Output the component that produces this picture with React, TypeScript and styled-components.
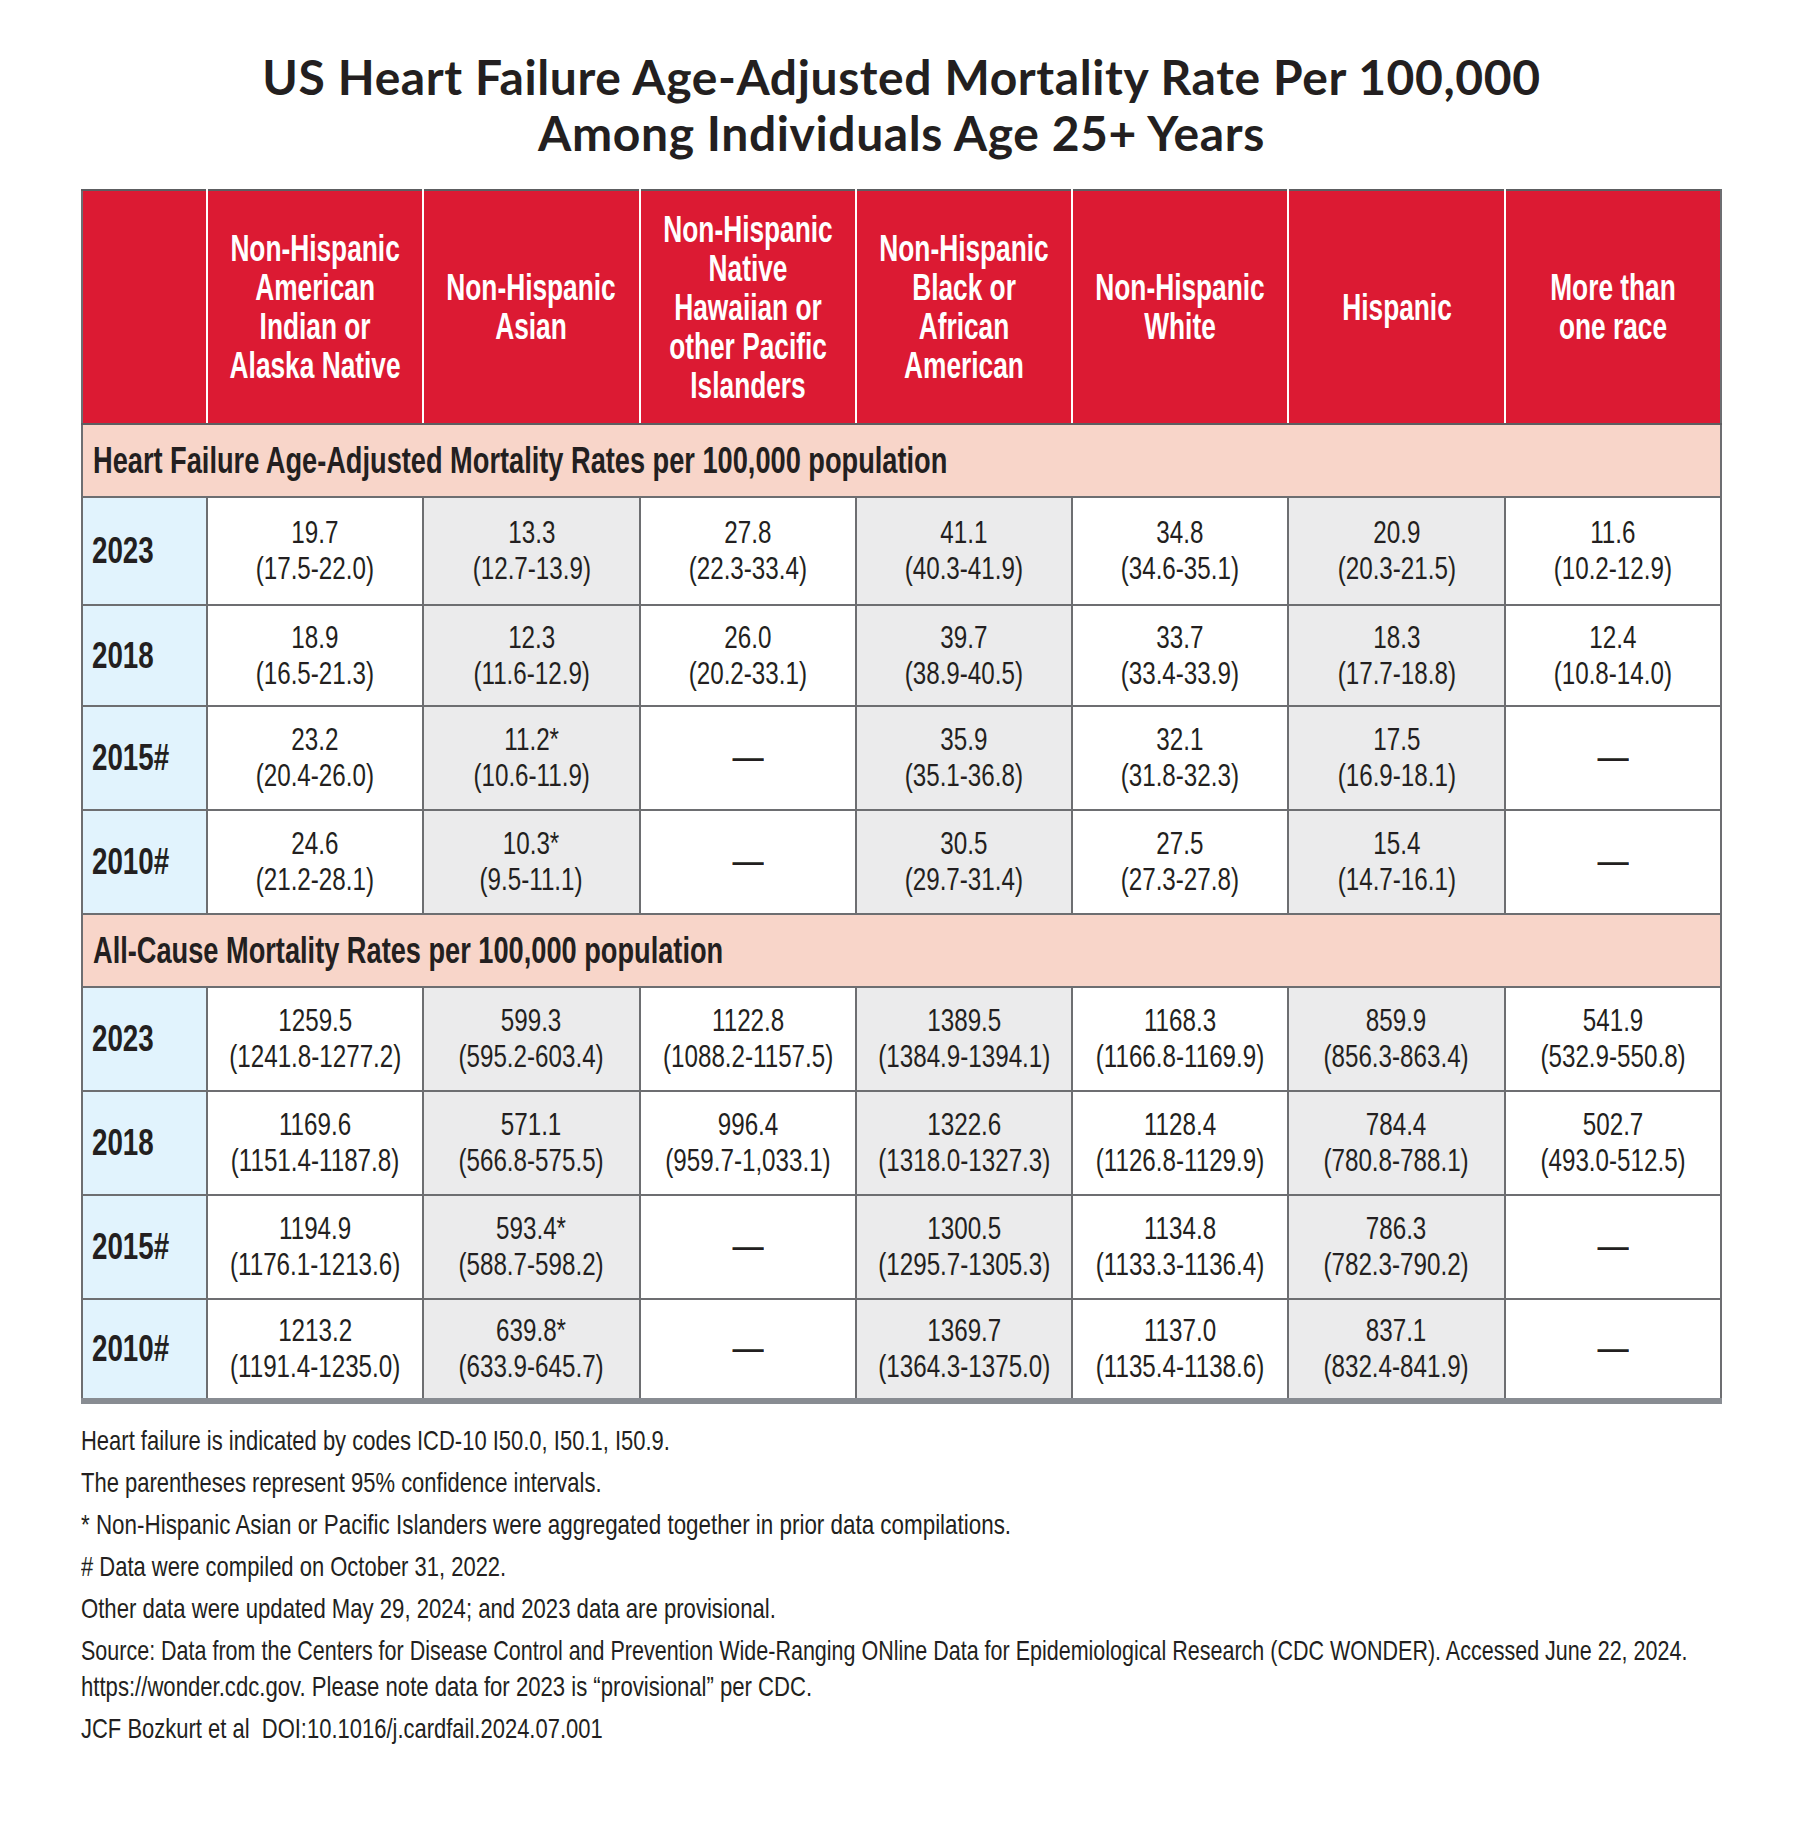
import React from "react";
import styled, { createGlobalStyle } from "styled-components";

const GlobalStyle = createGlobalStyle`
  html, body { margin: 0; padding: 0; background: #ffffff; }
  body { width: 1800px; height: 1822px; overflow: hidden; }
`;

const BASE = `"Liberation Sans", Arial, sans-serif`;

const Page = styled.div`
  width: 1800px;
  height: 1822px;
  box-sizing: border-box;
  padding: 49px 78px 0 81px;
  display: flex;
  flex-direction: column;
  overflow: hidden;
  font-family: ${BASE};
  color: #231f20;
`;

const Title = styled.h1`
  margin: 0 0 28px 0;
  font-family: "Lato", "Liberation Sans", sans-serif;
  font-weight: 700;
  font-size: 48px;
  line-height: 56px;
  letter-spacing: 0.6px;
  text-align: center;
  color: #231f20;
`;

/* Condensed-type emulation: the original uses a condensed face */
const Squeeze = styled.span<{ $x: number; $origin?: "left" | "center" }>`
  display: inline-block;
  white-space: nowrap;
  transform: scaleX(${(p) => p.$x});
  transform-origin: ${(p) => p.$origin ?? "center"} center;
`;

const Center = styled.div`
  display: flex;
  justify-content: center;
  align-items: center;
`;

const Table = styled.table`
  width: 1641px;
  border-collapse: collapse;
  table-layout: fixed;
`;

const HeadCell = styled.th<{ $first?: boolean; $last?: boolean }>`
  height: 234px;
  box-sizing: border-box;
  padding: 0;
  background: #dc1a33;
  color: #ffffff;
  font-weight: 700;
  font-size: 36px;
  line-height: 39px;
  text-align: center;
  vertical-align: middle;
  border-top: 2px solid #5d5e61;
  border-bottom: 2px solid #5d5e61;
  border-left: 2px solid ${(p) => (p.$first ? "#6d6e71" : "#ffffff")};
  border-right: 2px solid ${(p) => (p.$last ? "#6d6e71" : "#ffffff")};
`;

const SectionCell = styled.td`
  height: 73px;
  box-sizing: border-box;
  padding: 0 0 0 10px;
  background: #f8d5c9;
  border: 2px solid #6d6e71;
  font-weight: 700;
  font-size: 37px;
  text-align: left;
  vertical-align: middle;
`;

const YearCell = styled.th`
  box-sizing: border-box;
  padding: 0 0 0 9px;
  background: #e1f3fd;
  border: 2px solid #6d6e71;
  font-weight: 700;
  font-size: 37px;
  text-align: left;
  vertical-align: middle;
`;

const DataCell = styled.td<{ $shade: boolean }>`
  box-sizing: border-box;
  padding: 0;
  background: ${(p) => (p.$shade ? "#ebebec" : "#ffffff")};
  border: 2px solid #6d6e71;
  font-weight: 400;
  font-size: 31px;
  line-height: 36px;
  text-align: center;
  vertical-align: middle;
`;

const Row = styled.tr<{ $h: number; $closing?: boolean }>`
  height: ${(p) => p.$h}px;
  & > th,
  & > td {
    border-bottom: ${(p) => (p.$closing ? "6px solid #888c92" : "2px solid #6d6e71")};
  }
`;

const Dash = styled.span`
  font-size: 40px;
  line-height: 36px;
`;

const Line = styled.span`
  display: block;
`;

const Notes = styled.div`
  margin-top: 19px;
  display: flex;
  flex-direction: column;
  gap: 6px;
  overflow: hidden;
  font-size: 28px;
  line-height: 36px;
  color: #231f20;
`;

const Note = styled.p`
  margin: 0;
`;

type Cell = { v: string; ci: string } | null;

const headers: string[][] = [
  ["Non-Hispanic", "American", "Indian or", "Alaska Native"],
  ["Non-Hispanic", "Asian"],
  ["Non-Hispanic", "Native", "Hawaiian or", "other Pacific", "Islanders"],
  ["Non-Hispanic", "Black or", "African", "American"],
  ["Non-Hispanic", "White"],
  ["Hispanic"],
  ["More than", "one race"],
];

const c = (v: string, ci: string): Cell => ({ v, ci });

const hfRows: { year: string; h: number; cells: Cell[] }[] = [
  {
    year: "2023",
    h: 108,
    cells: [
      c("19.7", "(17.5-22.0)"),
      c("13.3", "(12.7-13.9)"),
      c("27.8", "(22.3-33.4)"),
      c("41.1", "(40.3-41.9)"),
      c("34.8", "(34.6-35.1)"),
      c("20.9", "(20.3-21.5)"),
      c("11.6", "(10.2-12.9)"),
    ],
  },
  {
    year: "2018",
    h: 101,
    cells: [
      c("18.9", "(16.5-21.3)"),
      c("12.3", "(11.6-12.9)"),
      c("26.0", "(20.2-33.1)"),
      c("39.7", "(38.9-40.5)"),
      c("33.7", "(33.4-33.9)"),
      c("18.3", "(17.7-18.8)"),
      c("12.4", "(10.8-14.0)"),
    ],
  },
  {
    year: "2015#",
    h: 104,
    cells: [
      c("23.2", "(20.4-26.0)"),
      c("11.2*", "(10.6-11.9)"),
      null,
      c("35.9", "(35.1-36.8)"),
      c("32.1", "(31.8-32.3)"),
      c("17.5", "(16.9-18.1)"),
      null,
    ],
  },
  {
    year: "2010#",
    h: 104,
    cells: [
      c("24.6", "(21.2-28.1)"),
      c("10.3*", "(9.5-11.1)"),
      null,
      c("30.5", "(29.7-31.4)"),
      c("27.5", "(27.3-27.8)"),
      c("15.4", "(14.7-16.1)"),
      null,
    ],
  },
];

const acRows: { year: string; h: number; cells: Cell[] }[] = [
  {
    year: "2023",
    h: 104,
    cells: [
      c("1259.5", "(1241.8-1277.2)"),
      c("599.3", "(595.2-603.4)"),
      c("1122.8", "(1088.2-1157.5)"),
      c("1389.5", "(1384.9-1394.1)"),
      c("1168.3", "(1166.8-1169.9)"),
      c("859.9", "(856.3-863.4)"),
      c("541.9", "(532.9-550.8)"),
    ],
  },
  {
    year: "2018",
    h: 104,
    cells: [
      c("1169.6", "(1151.4-1187.8)"),
      c("571.1", "(566.8-575.5)"),
      c("996.4", "(959.7-1,033.1)"),
      c("1322.6", "(1318.0-1327.3)"),
      c("1128.4", "(1126.8-1129.9)"),
      c("784.4", "(780.8-788.1)"),
      c("502.7", "(493.0-512.5)"),
    ],
  },
  {
    year: "2015#",
    h: 104,
    cells: [
      c("1194.9", "(1176.1-1213.6)"),
      c("593.4*", "(588.7-598.2)"),
      null,
      c("1300.5", "(1295.7-1305.3)"),
      c("1134.8", "(1133.3-1136.4)"),
      c("786.3", "(782.3-790.2)"),
      null,
    ],
  },
  {
    year: "2010#",
    h: 102,
    cells: [
      c("1213.2", "(1191.4-1235.0)"),
      c("639.8*", "(633.9-645.7)"),
      null,
      c("1369.7", "(1364.3-1375.0)"),
      c("1137.0", "(1135.4-1138.6)"),
      c("837.1", "(832.4-841.9)"),
      null,
    ],
  },
];

function DataRows({ rows, closing }: { rows: typeof hfRows; closing?: boolean }) {
  return (
    <>
      {rows.map((r, ri) => (
        <Row key={r.year} $h={r.h} $closing={closing && ri === rows.length - 1}>
          <YearCell scope="row">
            <Squeeze $x={0.75} $origin="left">
              {r.year}
            </Squeeze>
          </YearCell>
          {r.cells.map((cell, i) => (
            <DataCell key={i} $shade={i % 2 === 1}>
              <Center>
                <Squeeze $x={0.78}>
                  {cell ? (
                    <>
                      <Line>{cell.v}</Line>
                      <Line>{cell.ci}</Line>
                    </>
                  ) : (
                    <Dash>—</Dash>
                  )}
                </Squeeze>
              </Center>
            </DataCell>
          ))}
        </Row>
      ))}
    </>
  );
}

export default function App() {
  return (
    <>
      <GlobalStyle />
      <Page>
        <Title>
          US Heart Failure Age-Adjusted Mortality Rate Per 100,000
          <br />
          Among Individuals Age 25+ Years
        </Title>
        <Table>
          <colgroup>
            <col style={{ width: 125 }} />
            {headers.map((_, i) => (
              <col key={i} />
            ))}
          </colgroup>
          <thead>
            <tr>
              <HeadCell $first />
              {headers.map((lines, i) => (
                <HeadCell key={i} $last={i === headers.length - 1}>
                  <Center>
                    <Squeeze $x={0.73}>
                      {lines.map((l, j) => (
                        <Line key={j}>{l}</Line>
                      ))}
                    </Squeeze>
                  </Center>
                </HeadCell>
              ))}
            </tr>
          </thead>
          <tbody>
            <tr>
              <SectionCell colSpan={8}>
                <Squeeze $x={0.735} $origin="left">
                  Heart Failure Age-Adjusted Mortality Rates per 100,000 population
                </Squeeze>
              </SectionCell>
            </tr>
            <DataRows rows={hfRows} />
            <tr>
              <SectionCell colSpan={8}>
                <Squeeze $x={0.735} $origin="left">
                  All-Cause Mortality Rates per 100,000 population
                </Squeeze>
              </SectionCell>
            </tr>
            <DataRows rows={acRows} closing />
          </tbody>
        </Table>
        <Notes>
          <Note>
            <Squeeze $x={0.785} $origin="left">
              Heart failure is indicated by codes ICD-10 I50.0, I50.1, I50.9.
            </Squeeze>
          </Note>
          <Note>
            <Squeeze $x={0.785} $origin="left">
              The parentheses represent 95% confidence intervals.
            </Squeeze>
          </Note>
          <Note>
            <Squeeze $x={0.8} $origin="left">
              * Non-Hispanic Asian or Pacific Islanders were aggregated together in prior data compilations.
            </Squeeze>
          </Note>
          <Note>
            <Squeeze $x={0.785} $origin="left">
              # Data were compiled on October 31, 2022.
            </Squeeze>
          </Note>
          <Note>
            <Squeeze $x={0.79} $origin="left">
              Other data were updated May 29, 2024; and 2023 data are provisional.
            </Squeeze>
          </Note>
          <Note>
            <Line>
              <Squeeze $x={0.768} $origin="left">
                Source: Data from the Centers for Disease Control and Prevention Wide-Ranging ONline Data for
                Epidemiological Research (CDC WONDER). Accessed June 22, 2024.
              </Squeeze>
            </Line>
            <Line>
              <Squeeze $x={0.79} $origin="left">
                https://wonder.cdc.gov. Please note data for 2023 is “provisional” per CDC.
              </Squeeze>
            </Line>
          </Note>
          <Note>
            <Squeeze $x={0.785} $origin="left">
              JCF Bozkurt et al&nbsp; DOI:10.1016/j.cardfail.2024.07.001
            </Squeeze>
          </Note>
        </Notes>
      </Page>
    </>
  );
}
